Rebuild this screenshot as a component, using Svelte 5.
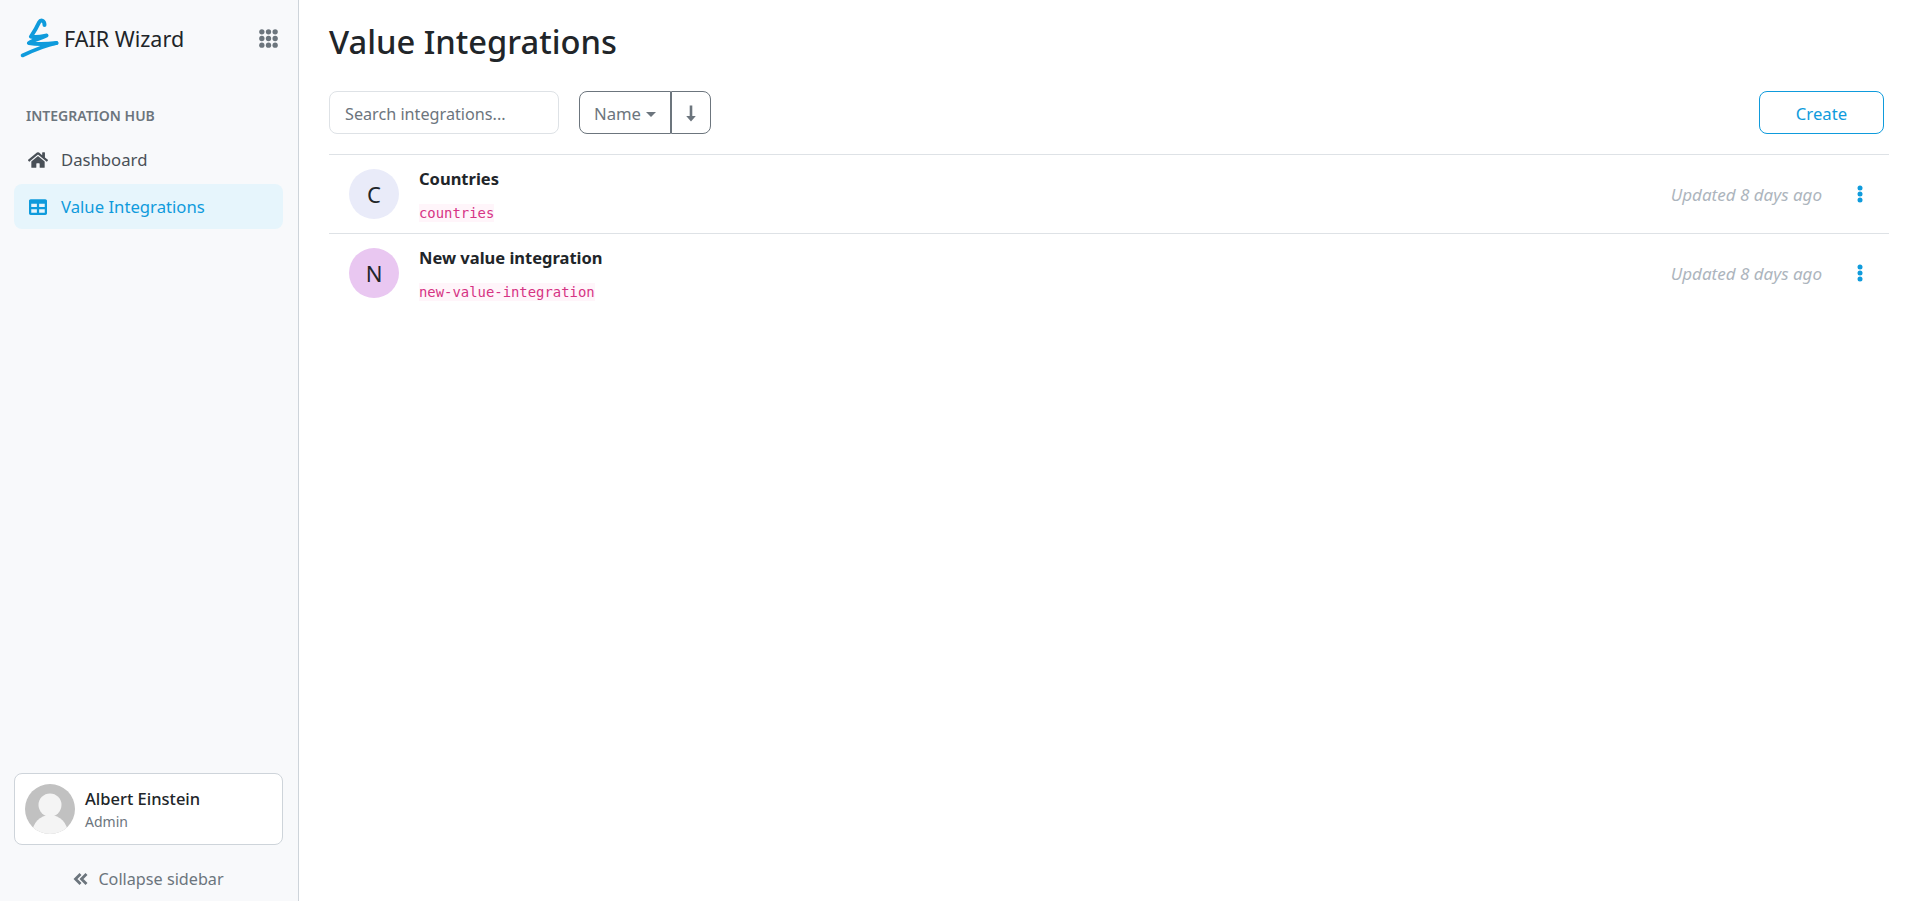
<script>
  let items = [
    { name: 'Countries', code: 'countries', letter: 'C', color: '#e9ebf9' },
    { name: 'New value integration', code: 'new-value-integration', letter: 'N', color: '#e9c7f1' }
  ];
</script>

<div class="layout">
  <aside class="sidebar">
    <div class="brand">
      <svg class="logo" width="40" height="40" viewBox="0 0 40 40" fill="none" stroke="#0f9bdc" stroke-linecap="round" stroke-linejoin="round">
        <path d="M24.500 7 C24.500 2.500 21 1 19 4.500 C17 9 14 14 11 18.500 C16 20 22 18.500 26.500 17.500 C20 21 13 22 9 25 C17 26.500 28 26 36.500 25" stroke-width="4" />
        <path d="M36.500 25 C25 27.500 12 33 2.500 37.500" stroke-width="3.600" />
      </svg>
      <span class="brand-name">FAIR Wizard</span>
      <svg class="grid-icon" width="19" height="19" viewBox="0 0 20 20" fill="#6c757d">
        {#each [3, 10, 17] as y}
          {#each [3, 10, 17] as x}
            <circle cx={x} cy={y} r="2.800" />
          {/each}
        {/each}
      </svg>
    </div>

    <div class="section-title">INTEGRATION HUB</div>
    <nav>
      <a class="nav-item" href="#dashboard">
        <svg width="20" height="18" viewBox="0 0 576 512" fill="currentColor"><path d="M280.4 148.3L96 300.1V464a16 16 0 0 0 16 16l112.1-.3a16 16 0 0 0 15.9-16V368a16 16 0 0 1 16-16h64a16 16 0 0 1 16 16v95.6a16 16 0 0 0 16 16.1L464 480a16 16 0 0 0 16-16V300L295.7 148.3a12.2 12.2 0 0 0-15.3 0zM571.6 251.5L488 182.6V44.1a12 12 0 0 0-12-12h-56a12 12 0 0 0-12 12v72.6L318.5 43a48 48 0 0 0-61 0L4.3 251.5a12 12 0 0 0-1.6 16.9l25.5 31A12 12 0 0 0 45.2 301l235.2-193.7a12.2 12.2 0 0 1 15.3 0L530.9 301a12 12 0 0 0 16.9-1.6l25.5-31a12 12 0 0 0-1.7-16.9z" /></svg>
        <span>Dashboard</span>
      </a>
      <a class="nav-item active" href="#values">
        <svg width="20" height="18" viewBox="0 0 512 512" fill="currentColor"><path d="M464 32H48C21.5 32 0 53.5 0 80v352c0 26.500 21.500 48 48 48h416c26.500 0 48-21.500 48-48V80c0-26.500-21.500-48-48-48zM224 416H64v-96h160v96zm0-160H64v-96h160v96zm224 160H288v-96h160v96zm0-160H288v-96h160v96z" /></svg>
        <span>Value Integrations</span>
      </a>
    </nav>

    <div class="spacer"></div>

    <div class="profile">
      <svg class="profile-pic" width="50" height="50" viewBox="0 0 50 50">
        <defs><clipPath id="pic"><circle cx="25" cy="25" r="25" /></clipPath></defs>
        <circle cx="25" cy="25" r="25" fill="#c1c1c1" />
        <g clip-path="url(#pic)" fill="#f4f4f4">
          <circle cx="25" cy="21" r="11.500" />
          <ellipse cx="25" cy="50" rx="18" ry="19" />
        </g>
      </svg>
      <div class="profile-info">
        <div class="profile-name">Albert Einstein</div>
        <div class="profile-role">Admin</div>
      </div>
    </div>

    <a class="collapse" href="#collapse">
      <svg width="15" height="14" viewBox="0 0 15 14" fill="none" stroke="#6c757d" stroke-width="2.800"><path d="M7.500 2 L2.500 7 L7.500 12 M13.500 2 L8.500 7 L13.500 12" /></svg>
      <span>Collapse sidebar</span>
    </a>
  </aside>

  <main class="content">
    <h1>Value Integrations</h1>
    <div class="toolbar">
      <input class="search" type="text" placeholder="Search integrations..." />
      <div class="sort">
        <button class="sort-name">Name<span class="caret"></span></button>
        <button class="sort-dir" aria-label="Sort direction">
          <svg width="10" height="17" viewBox="0 0 10 17" fill="#6c757d"><path d="M3.700 0.500h2.600v10.500h3.500L5 16.500 0.200 11h3.500z" /></svg>
        </button>
      </div>
      <button class="create">Create</button>
    </div>

    <div class="list">
      {#each items as item}
        <div class="row">
          <div class="avatar" style:background={item.color}>{item.letter}</div>
          <div class="info">
            <div class="title">{item.name}</div>
            <code>{item.code}</code>
          </div>
          <div class="updated">Updated 8 days ago</div>
          <svg class="more" width="6" height="18" viewBox="0 0 6 18" fill="#0f9bdc">
            <circle cx="3" cy="3" r="2.500" />
            <circle cx="3" cy="9" r="2.500" />
            <circle cx="3" cy="15" r="2.500" />
          </svg>
        </div>
      {/each}
    </div>
  </main>
</div>

<style>
  :global(body) {
    margin: 0;
    background: #fff;
    font-family: "Noto Sans", "Open Sans", sans-serif;
    color: #212529;
  }

  .layout {
    display: flex;
    height: 901px;
    overflow: hidden;
  }

  .sidebar {
    width: 299px;
    flex-shrink: 0;
    box-sizing: border-box;
    display: flex;
    flex-direction: column;
    background: #f8f9fb;
    border-right: 1px solid #ced4da;
    padding: 0 15px 0 14px;
  }

  .brand {
    display: flex;
    align-items: center;
    height: 76px;
    margin-left: 6px;
  }

  .logo {
    flex-shrink: 0;
  }

  .brand-name {
    font-size: 21.500px;
    margin-left: 4px;
    color: #212529;
    flex: 1;
  }

  .grid-icon {
    margin-right: 5px;
  }

  .section-title {
    margin: 30px 0 0 12px;
    font-size: 14px;
    font-weight: 600;
    color: #6c757d;
    line-height: 20px;
  }

  nav {
    margin-top: 11px;
    display: flex;
    flex-direction: column;
    gap: 2px;
  }

  .nav-item {
    display: flex;
    align-items: center;
    gap: 13px;
    height: 45px;
    padding-left: 14px;
    border-radius: 8px;
    color: #495057;
    font-size: 16.700px;
    text-decoration: none;
  }

  .nav-item.active {
    background: #e6f5fc;
    color: #0f9bdc;
  }

  .spacer {
    flex: 1;
  }

  .profile {
    display: flex;
    align-items: center;
    gap: 10px;
    height: 72px;
    box-sizing: border-box;
    padding-left: 10px;
    background: #fff;
    border: 1px solid #ced4da;
    border-radius: 8px;
  }

  .profile-name {
    font-size: 16.500px;
    font-weight: 500;
    line-height: 24px;
    color: #212529;
  }

  .profile-role {
    font-size: 14px;
    line-height: 21px;
    color: #6c757d;
  }

  .collapse {
    display: flex;
    align-items: center;
    justify-content: center;
    gap: 10px;
    height: 56px;
    box-sizing: border-box;
    padding-top: 12px;
    color: #6c757d;
    font-size: 16.200px;
    text-decoration: none;
  }

  .content {
    flex: 1;
    min-width: 0;
    padding: 0 29px 0 30px;
  }

  h1 {
    margin: 0;
    padding-top: 18px;
    font-size: 32.700px;
    font-weight: 500;
    line-height: 47px;
    color: #212529;
  }

  .toolbar {
    display: flex;
    align-items: stretch;
    height: 43px;
    margin-top: 26px;
    padding-right: 5px;
  }

  .search {
    width: 230px;
    box-sizing: border-box;
    padding: 2px 15px 0;
    border: 1px solid #dee2e6;
    border-radius: 8px;
    font: inherit;
    font-size: 16.200px;
    color: #212529;
    outline: none;
  }

  .search::placeholder {
    color: #6c757d;
    opacity: 1;
  }

  .sort {
    display: flex;
    margin-left: 20px;
  }

  .sort button {
    background: #fff;
    border: 1px solid #6c757d;
    color: #6c757d;
    font: inherit;
    font-size: 16.700px;
    padding: 2px 0 0;
    display: flex;
    align-items: center;
    justify-content: center;
  }

  .sort-name {
    width: 92px;
    border-radius: 8px 0 0 8px;
    gap: 5px;
  }

  .sort-dir {
    width: 40px;
    border-radius: 0 8px 8px 0;
  }

  .caret {
    width: 0;
    height: 0;
    margin-top: 1px;
    border-top: 5px solid #6c757d;
    border-left: 5px solid transparent;
    border-right: 5px solid transparent;
  }

  .create {
    margin-left: auto;
    width: 125px;
    padding-top: 2px;
    background: #fff;
    border: 1px solid #0f9bdc;
    border-radius: 8px;
    color: #0f9bdc;
    font: inherit;
    font-size: 16.700px;
  }

  .list {
    margin-top: 20px;
  }

  .row {
    display: flex;
    align-items: center;
    height: 79px;
    box-sizing: border-box;
    border-top: 1px solid #dee2e6;
    padding-left: 20px;
  }

  .avatar {
    width: 50px;
    height: 50px;
    flex-shrink: 0;
    border-radius: 50%;
    display: flex;
    align-items: center;
    justify-content: center;
    font-size: 22px;
    color: #212529;
  }

  .info {
    margin-left: 20px;
    flex: 1;
    display: flex;
    flex-direction: column;
    align-items: flex-start;
  }

  .title {
    font-size: 16.500px;
    font-weight: 700;
    line-height: 24px;
    color: #212529;
  }

  code {
    margin-top: 13px;
    font-family: "DejaVu Sans Mono", "Liberation Mono", monospace;
    font-size: 13.900px;
    line-height: 18px;
    color: #d63384;
    background: #fff5fa;
  }

  .updated {
    font-size: 17px;
    font-style: italic;
    color: #adb5bd;
  }

  .more {
    margin: 0 26px 0 35px;
  }
</style>
